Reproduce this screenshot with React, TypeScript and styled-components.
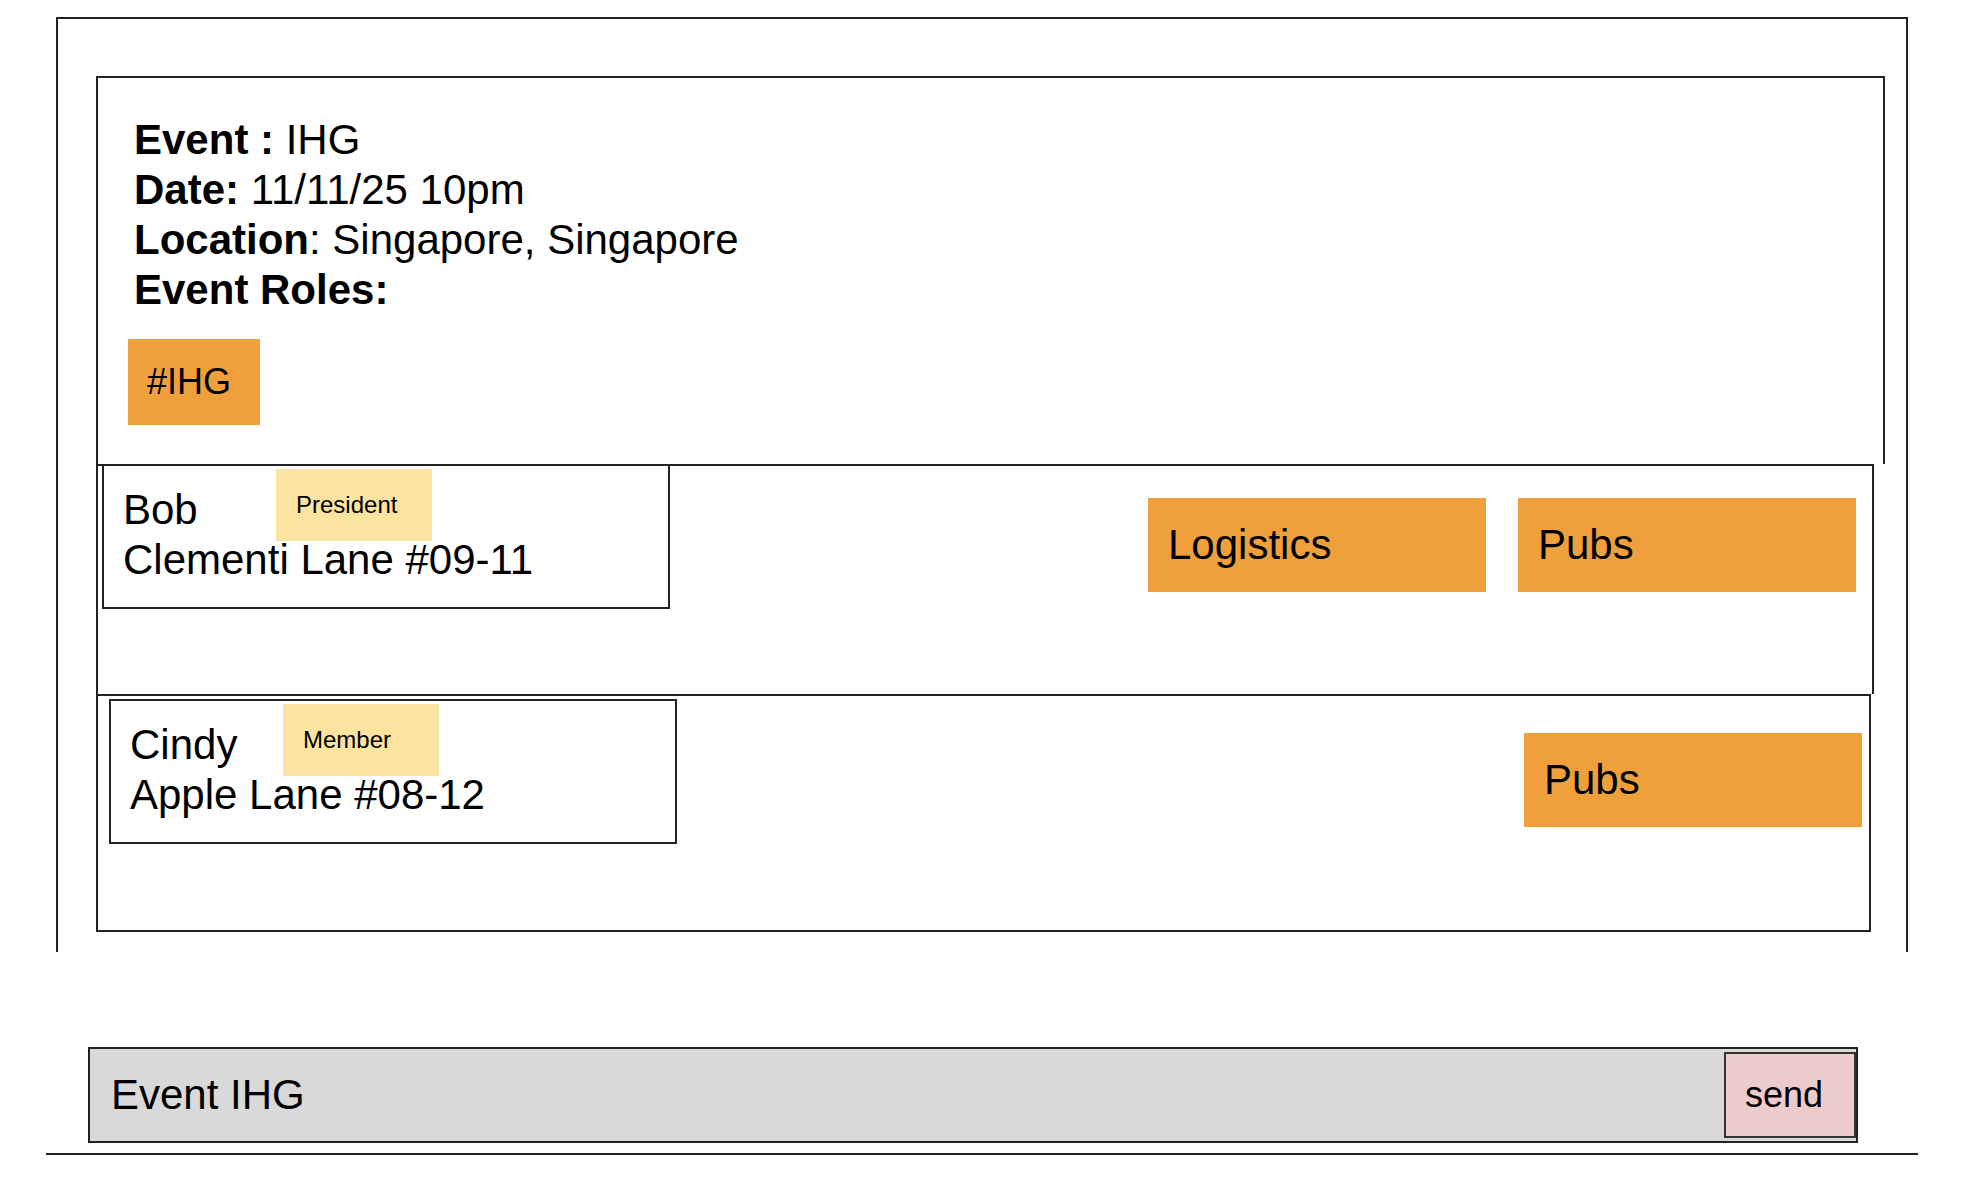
import React from "react";
import styled, { createGlobalStyle } from "styled-components";

const GlobalStyle = createGlobalStyle`
  body {
    margin: 0;
    background: #fff;
    color: #000;
    font-family: "Liberation Sans", Arial, sans-serif;
  }
  * {
    box-sizing: border-box;
  }
`;

const Page = styled.div`
  width: 1982px;
  height: 1194px;
  overflow: hidden;
  padding-top: 17px;
`;

const OuterFrame = styled.div`
  margin-left: 56px;
  width: 1852px;
  height: 935px;
  border: 2px solid #222;
  border-bottom: none;
  padding: 57px 21px 0 38px;
`;

const InnerPanel = styled.div`
  display: flex;
  flex-direction: column;
  border-left: 2px solid #222;
  border-top: 2px solid #222;
`;

const Header = styled.div`
  border-right: 2px solid #222;
  padding: 37px 0 39px 36px;
`;

const InfoLine = styled.div`
  font-size: 42px;
  line-height: 50px;
`;

const Label = styled.span`
  font-weight: bold;
`;

const Tag = styled.div`
  display: flex;
  align-items: center;
  margin: 24px 0 0 -6px;
  width: 132px;
  height: 86px;
  padding-left: 19px;
  background: #f0a03b;
  font-size: 36px;
`;

const MemberRow = styled.div<{ $last?: boolean }>`
  display: flex;
  justify-content: space-between;
  align-items: flex-start;
  border-top: 2px solid #222;
  border-right: 2px solid #222;
  border-bottom: ${(p) => (p.$last ? "2px solid #222" : "none")};
  height: ${(p) => (p.$last ? "238px" : "230px")};
  margin-right: ${(p) => (p.$last ? "14px" : "11px")};
  padding-left: ${(p) => (p.$last ? "11px" : "4px")};
  padding-right: ${(p) => (p.$last ? "7px" : "16px")};
`;

const MemberCard = styled.div<{ $offset: number }>`
  position: relative;
  width: 568px;
  height: 145px;
  margin-top: ${(p) => p.$offset}px;
  border: 2px solid #222;
  padding: 19px 0 0 19px;
  font-size: 42px;
  line-height: 50px;
`;

const RankBadge = styled.div`
  position: absolute;
  left: 172px;
  top: 3px;
  width: 156px;
  height: 72px;
  display: flex;
  align-items: center;
  padding-left: 20px;
  background: #fce4a0;
  font-size: 24px;
  line-height: 1;
`;

const RoleGroup = styled.div<{ $offset: number }>`
  display: flex;
  gap: 32px;
  margin-top: ${(p) => p.$offset}px;
`;

const RoleButton = styled.div`
  display: flex;
  align-items: center;
  width: 338px;
  height: 94px;
  padding-left: 20px;
  background: #f0a03b;
  font-size: 42px;
`;

const Composer = styled.div`
  display: flex;
  align-items: center;
  justify-content: space-between;
  margin: 95px 0 0 88px;
  width: 1770px;
  height: 96px;
  border: 2px solid #222;
  background: #d9d9d9;
`;

const MessageInput = styled.input`
  flex: 1;
  border: none;
  outline: none;
  background: transparent;
  padding-left: 21px;
  font-family: "Liberation Sans", Arial, sans-serif;
  font-size: 42px;
  color: #000;
`;

const SendButton = styled.button`
  width: 132px;
  height: 86px;
  border: 2px solid #333;
  background: #eecbcb;
  font-family: "Liberation Sans", Arial, sans-serif;
  font-size: 36px;
  color: #000;
  text-align: left;
  padding: 0 0 0 19px;
`;

const BottomRule = styled.div`
  margin: 10px 0 0 46px;
  width: 1872px;
  border-top: 2px solid #222;
`;

type Member = {
  name: string;
  address: string;
  rank: string;
  roles: string[];
};

const members: Member[] = [
  { name: "Bob", address: "Clementi Lane #09-11", rank: "President", roles: ["Logistics", "Pubs"] },
  { name: "Cindy", address: "Apple Lane #08-12", rank: "Member", roles: ["Pubs"] },
];

export default function App() {
  return (
    <Page>
      <GlobalStyle />
      <OuterFrame>
        <InnerPanel>
          <Header>
            <InfoLine>
              <Label>Event :</Label> IHG
            </InfoLine>
            <InfoLine>
              <Label>Date:</Label> 11/11/25 10pm
            </InfoLine>
            <InfoLine>
              <Label>Location</Label>: Singapore, Singapore
            </InfoLine>
            <InfoLine>
              <Label>Event Roles:</Label>
            </InfoLine>
            <Tag>#IHG</Tag>
          </Header>
          {members.map((m, i) => {
            const last = i === members.length - 1;
            return (
              <MemberRow key={m.name} $last={last}>
                <MemberCard $offset={last ? 3 : -2}>
                  <div>{m.name}</div>
                  <div>{m.address}</div>
                  <RankBadge>{m.rank}</RankBadge>
                </MemberCard>
                <RoleGroup $offset={last ? 37 : 32}>
                  {m.roles.map((r) => (
                    <RoleButton key={r}>{r}</RoleButton>
                  ))}
                </RoleGroup>
              </MemberRow>
            );
          })}
        </InnerPanel>
      </OuterFrame>
      <Composer>
        <MessageInput defaultValue="Event IHG" />
        <SendButton>send</SendButton>
      </Composer>
      <BottomRule />
    </Page>
  );
}
